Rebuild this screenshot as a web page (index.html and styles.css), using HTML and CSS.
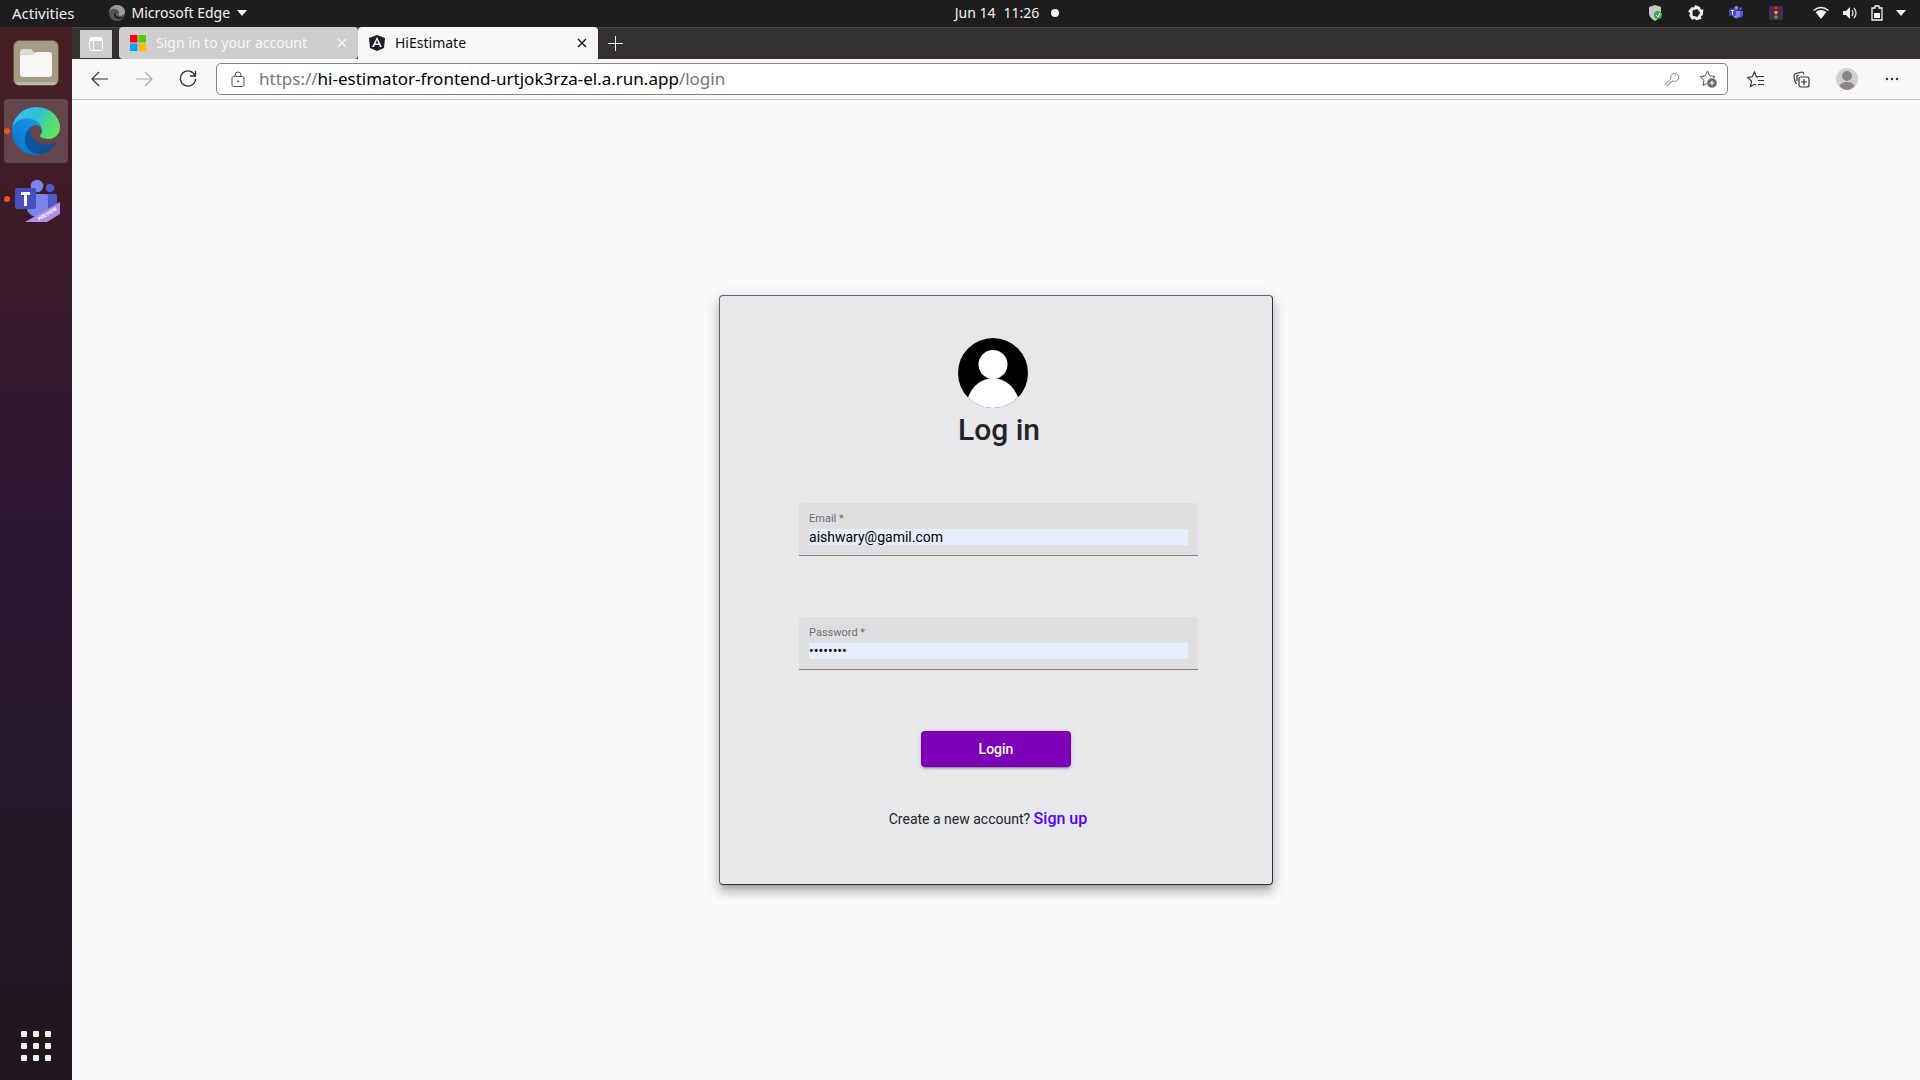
FILE: index.html
```html
<!DOCTYPE html>
<html lang="en">
<head>
<meta charset="utf-8">
<meta name="viewport" content="width=device-width, initial-scale=1">
<title>HiEstimate</title>
<link rel="stylesheet" href="styles.css">
</head>
<body>
<svg class="defs" aria-hidden="true">
  <defs>
    <linearGradient id="edge-dark" x1="0" x2="1" y1="0" y2="0"><stop offset="0" stop-color="#0c59a4"/><stop offset="1" stop-color="#114a8b"/></linearGradient>
    <linearGradient id="edge-mid" x1=".8" x2=".2" y1="0" y2="1"><stop offset="0" stop-color="#1b9de2"/><stop offset=".4" stop-color="#1289da"/><stop offset="1" stop-color="#0078d4"/></linearGradient>
    <linearGradient id="edge-top" x1="0" x2="1" y1=".3" y2=".7"><stop offset="0" stop-color="#35c1f1"/><stop offset=".45" stop-color="#2cc3d5"/><stop offset=".75" stop-color="#52dc7c"/><stop offset="1" stop-color="#5ee45f"/></linearGradient>
    <symbol id="teams" viewBox="0 0 48 44">
      <circle cx="38" cy="9" r="4.300" fill="#5059c9"/>
      <path d="M31 15h12q2 0 2 2v13a8 8 0 0 1-14 3z" fill="#5059c9"/>
      <circle cx="25" cy="7" r="6.300" fill="#7b83eb"/>
      <path d="M15 15h19q2 0 2 2v12a11 11 0 0 1-21 2z" fill="#7b83eb"/>
      <rect x="3" y="9" width="21" height="21" rx="2" fill="#4950bc"/>
      <path d="M9 13h9v3h-3v11h-3V16H9z" fill="#fff"/>
    </symbol>
  </defs>
</svg>

<header class="topbar">
  <div class="topbar-left">
    <button class="plain activities">Activities</button>
    <button class="plain app-menu">
      <svg width="16" height="16" viewBox="0 0 256 256"><circle cx="128" cy="128" r="128" fill="#555"/><path fill="#999" d="M152 149c-1 1-3 3-3 6 0 3 2 5 5 7 14 10 41 9 41 9a60 60 0 0 0 61-61c0-22-8-37-11-44C223 24 178 0 128 0A128 128 0 0 0 0 126c0-36 37-66 80-66 4 0 24 0 42 10a73 73 0 0 1 31 29c6 11 7 24 7 30s-3 13-8 20z"/><path fill="#1d1d1d" d="M240 184c-40 20-120 20-138-35-8-30 15-52 38-45-40-10-68 20-60 65 10 60 110 70 160 15z"/></svg>
      <span>Microsoft Edge</span>
      <svg width="10" height="6" viewBox="0 0 10 6"><path d="M0 0h10L5 6z" fill="#f2f2f2"/></svg>
    </button>
  </div>
  <button class="plain clock"><span class="clock-text"><span>Jun 14</span><span>11:26</span></span><span class="clock-dot"></span></button>
  <div class="topbar-right">
    <svg width="16" height="16" viewBox="0 0 16 16"><path d="M7 0l6 2v6c0 4-3 6-6 8-3-2-6-4-6-8V2z" fill="#c8c8c8"/><circle cx="10" cy="10" r="4" fill="#2fb34a"/><path d="M8 10l2 2 2-4" fill="none" stroke="#fff"/></svg>
    <svg width="16" height="16" viewBox="0 0 16 16"><g fill="#eee"><path id="blade" d="M7 0l5 2 1 3.500L9 4 5 5.500z"/><use href="#blade" transform="rotate(72 8 8)"/><use href="#blade" transform="rotate(144 8 8)"/><use href="#blade" transform="rotate(216 8 8)"/><use href="#blade" transform="rotate(288 8 8)"/></g></svg>
    <svg width="16" height="16"><use href="#teams"/></svg>
    <svg width="16" height="16" viewBox="0 0 16 16"><rect x="1" y="1" width="14" height="14" rx="1" fill="#4a2c50"/><ellipse cx="8" cy="3" rx="2" ry="1.500" fill="#e02424"/><circle cx="8" cy="7.500" r="1.800" fill="#ef9a3c"/><ellipse cx="8" cy="12" rx="2" ry="1.700" fill="#2fa84f"/></svg>
    <div class="status">
      <svg width="16" height="14" viewBox="0 0 16 14"><path d="M2.500 6q5.500-4 11 0L8 13z" fill="#f2f2f2"/><path d="M.5 4.500q7.500-6 15 0" fill="none" stroke="#f2f2f2" stroke-width="1.500"/></svg>
      <svg width="16" height="14" viewBox="0 0 16 14"><path d="M1 5h3l4-4v12L4 9H1z" fill="#f2f2f2"/><path d="M10 4q2 3 0 6M12 2q4 5 0 10" fill="none" stroke="#ddd" stroke-width="1.300"/></svg>
      <svg width="12" height="16" viewBox="0 0 12 16"><path d="M4 1h4v2h3v12H1V3h3z" fill="none" stroke="#f2f2f2" stroke-width="1.300"/><path d="M3 8h6v5H3z" fill="#f2f2f2"/></svg>
      <svg width="10" height="6" viewBox="0 0 10 6"><path d="M0 0h10L5 6z" fill="#f2f2f2"/></svg>
    </div>
  </div>
</header>

<div class="desktop">
  <nav class="dock" aria-label="Dock">
    <button class="dock-item" aria-label="Files">
      <svg width="46" height="46" viewBox="0 0 46 46"><rect x=".5" y=".5" width="45" height="45" rx="6" fill="#a39b84" stroke="#5d5546"/><path d="M2 42h42q-1 3-4 3H6q-3 0-4-3z" fill="#bfb8a3"/><path d="M7 12q0-3 3-3h8l4 4v6H7z" fill="#ded9cb"/><path d="M7 17q0-2 3-2h9l4-3h13q3 0 3 3v19q0 3-3 3H10q-3 0-3-3z" fill="#f8f7f5"/></svg>
    </button>
    <button class="dock-item active" aria-label="Microsoft Edge">
      <span class="running"></span>
      <svg width="48" height="48" viewBox="0 0 256 256">
        <path fill="url(#edge-dark)" d="M231 190.500c-3.400 1.800-6.900 3.400-10.500 4.700a101.500 101.500 0 0 1-35.900 6.400c-47.300 0-88.500-32.500-88.500-74.300A31.500 31.500 0 0 1 112.500 100c-42.800 1.800-53.800 46.400-53.800 72.500 0 74 68.100 81.400 82.800 81.400 7.900 0 19.800-2.300 27-4.600l1.300-.4a128.300 128.300 0 0 0 66.600-52.800 4 4 0 0 0-5.400-5.600z"/>
        <path fill="url(#edge-mid)" d="M105.700 241.400A79.200 79.200 0 0 1 83 220.100a80.700 80.700 0 0 1 29.500-120c3.200-1.500 8.500-4.100 15.600-4a32.400 32.400 0 0 1 25.700 13 31.900 31.900 0 0 1 6.300 18.700c0-.2 24.500-79.600-80-79.600-43.900 0-80 41.600-80 78.200a130.200 130.200 0 0 0 12.100 56 128 128 0 0 0 156.400 67 75.500 75.500 0 0 1-62.800-8z"/>
        <path fill="url(#edge-top)" d="M152.300 148.900c-.9 1-3.400 2.500-3.400 5.600 0 2.600 1.700 5.200 4.800 7.300 14.300 10 41.400 8.600 41.500 8.600a59.600 59.600 0 0 0 30.300-8.300 61.400 61.400 0 0 0 30.400-52.900c.3-22.400-8-37.300-11.300-43.900C223.500 23.900 177.700 0 128 0A128 128 0 0 0 0 126.200c.5-36.500 36.800-66 80-66 3.500 0 23.500.3 42 10a72.600 72.600 0 0 1 30.900 29.300c6.100 10.600 7.200 24.100 7.200 29.500s-2.700 13.300-7.800 19.900z"/>
      </svg>
    </button>
    <button class="dock-item teams" aria-label="Microsoft Teams">
      <span class="running"></span>
      <svg width="48" height="44" viewBox="0 0 48 44"><use href="#teams" width="48" height="44"/><path d="M13 43l35-20v12l-13 8z" fill="#b18ee6"/><text class="ribbon" transform="translate(27 42) rotate(-31)">PREVIEW</text></svg>
    </button>
    <button class="dock-item apps" aria-label="Show Applications">
      <svg width="30" height="30" viewBox="0 0 30 30" fill="#eef0ea"><rect width="6" height="6" rx="1"/><rect x="12" width="6" height="6" rx="1"/><rect x="24" width="6" height="6" rx="1"/><rect y="12" width="6" height="6" rx="1"/><rect x="12" y="12" width="6" height="6" rx="1"/><rect x="24" y="12" width="6" height="6" rx="1"/><rect y="24" width="6" height="6" rx="1"/><rect x="12" y="24" width="6" height="6" rx="1"/><rect x="24" y="24" width="6" height="6" rx="1"/></svg>
    </button>
  </nav>

  <div class="browser">
    <div class="tabstrip">
      <button class="tab-actions" aria-label="Tab actions"><svg width="14" height="14" viewBox="0 0 14 14" fill="none" stroke="#fff"><rect x=".5" y=".5" width="13" height="13" rx="2"/><path d="M1 1.500h12M1 2.500h12M1 3.500h12M4.500 4v9"/></svg></button>
      <div class="tab inactive">
        <svg width="16" height="16" viewBox="0 0 16 16"><path d="M0 0h7.500v7.500H0z" fill="#ff0018"/><path d="M8.500 0H16v7.500H8.500z" fill="#4fce00"/><path d="M0 8.500h7.500V16H0z" fill="#00a3f5"/><path d="M8.500 8.500H16V16H8.500z" fill="#ffba00"/></svg>
        <span class="tab-title">Sign in to your account</span>
        <button class="tab-close" aria-label="Close tab"><svg width="10" height="10" viewBox="0 0 10 10"><path d="M1 1l8 8M9 1L1 9" fill="none" stroke="currentColor" stroke-width="1.300"/></svg></button>
      </div>
      <div class="tab current">
        <svg width="16" height="16" viewBox="0 0 16 16"><path d="M8 0l8 3-1 10-7 3-7-3L0 3z" fill="#1a1e29"/><path d="M8 2L3 12h2l1-2h4l1 2h2zM8 5l1.500 3.500h-3z" fill="#fff" fill-rule="evenodd"/></svg>
        <span class="tab-title">HiEstimate</span>
        <button class="tab-close" aria-label="Close tab"><svg width="10" height="10" viewBox="0 0 10 10"><path d="M1 1l8 8M9 1L1 9" fill="none" stroke="currentColor" stroke-width="1.300"/></svg></button>
      </div>
      <button class="new-tab" aria-label="New tab"><svg width="15" height="15" viewBox="0 0 15 15"><path d="M7.500 0v15M0 7.500h15" stroke="#fff"/></svg></button>
    </div>

    <div class="toolbar">
      <button class="tool" aria-label="Back"><svg width="18" height="16" viewBox="0 0 18 16"><path d="M8 1L1 8l7 7M1 8h16" fill="none" stroke="#333" stroke-width="1.200"/></svg></button>
      <button class="tool" aria-label="Forward"><svg width="18" height="16" viewBox="0 0 18 16"><path d="M10 1l7 7-7 7M17 8H1" fill="none" stroke="#aaa" stroke-width="1.200"/></svg></button>
      <button class="tool" aria-label="Refresh"><svg width="18" height="18" viewBox="0 0 18 18"><path d="M16 5.500A7.600 7.600 0 1 0 16.600 9M16.500 1v5H11" fill="none" stroke="#333" stroke-width="1.300"/></svg></button>
      <div class="address">
        <svg width="14" height="16" viewBox="0 0 14 16" fill="none" stroke="#555"><rect x="1" y="5.500" width="12" height="10" rx="1.500"/><path d="M4 5.500V4a3 3 0 0 1 6 0v1.500"/><circle cx="7" cy="10.500" r=".6" fill="#555"/></svg>
        <div class="url" role="textbox" aria-label="Address" contenteditable="true" spellcheck="false">https://<span class="host">hi-estimator-frontend-urtjok3rza-el.a.run.app</span>/login</div>
        <button class="inner-tool" aria-label="Saved passwords"><svg width="14" height="14" viewBox="0 0 14 14"><path d="M6 7A4 4 0 1 1 8 9L7 9v1H5v2H4v1l-2 .500-1-1V11z" fill="none" stroke="#8b8b8b"/><circle cx="10.500" cy="3.500" r=".7" fill="#888"/></svg></button>
        <button class="inner-tool" aria-label="Add to favorites"><svg width="18" height="18" viewBox="0 0 18 18"><path d="M8.500 1l2.200 4.800 5.300.700-4 3.700 1 5.300-4.500-2.500L4 15.500l1-5.300-4-3.700 5.300-.7z" fill="none" stroke="#555"/><circle cx="13" cy="13" r="5" fill="#666" stroke="#fff" stroke-width=".5"/><path d="M13 10.500v5M10.500 13h5" stroke="#fff" stroke-width="1.200"/></svg></button>
      </div>
      <button class="tool" aria-label="Favorites"><svg width="18" height="17" viewBox="0 0 18 17"><path d="M11 6.200l-1.500-.3L7.500 1 5.200 5.800.8 6.400l3.700 3.700-1 5.400 4-2.200 1.500.7M10 5.500h7M11 9.500h6M11 13.500h6" fill="none" stroke="#333" stroke-width="1.200"/></svg></button>
      <button class="tool wide" aria-label="Collections"><svg width="17" height="17" viewBox="0 0 17 17" fill="none" stroke="#333" stroke-width="1.200"><rect x="6" y="6" width="10" height="10" rx="2"/><path d="M11 8v6M8 11h6M4 12.500Q2.500 12.500 2 10.500L1 5q0-2 2-2.500L9 1q1.500 0 2 2.500M4 10V6q0-2 2-2"/></svg></button>
      <button class="tool wide" aria-label="Profile"><svg width="22" height="22" viewBox="0 0 22 22"><circle cx="11" cy="11" r="11" fill="#d2d0ce"/><circle cx="11" cy="8" r="5" fill="#8a8886"/><path d="M3.500 18Q5 14 11 14t7.500 4Q15 22 11 22t-7.500-4z" fill="#8a8886"/></svg></button>
      <button class="tool" aria-label="Settings and more"><svg width="14" height="4" viewBox="0 0 14 4" fill="#333"><circle cx="2" cy="2" r="1.200"/><circle cx="7" cy="2" r="1.200"/><circle cx="12" cy="2" r="1.200"/></svg></button>
    </div>

    <main class="page">
      <form class="card">
        <div class="heading">
          <svg width="70" height="70" viewBox="0 0 70 70"><circle cx="35" cy="35" r="35"/><circle cx="35" cy="26.500" r="14.500" fill="#fff"/><path d="M10 59.500C14 48 23 40.500 35 40.500S56 48 60 59.500A35 35 0 0 1 10 59.500z" fill="#fff"/></svg>
          <h1>Log in</h1>
        </div>
        <div class="field">
          <label for="email">Email *</label>
          <input id="email" type="email" value="aishwary@gamil.com">
        </div>
        <div class="field">
          <label for="password">Password *</label>
          <input id="password" type="password" value="password">
        </div>
        <button class="login" type="button">Login</button>
        <p class="signup">Create a new account? <a href="#signup">Sign up</a></p>
      </form>
    </main>
  </div>
</div>
</body>
</html>
```
FILE: styles.css
```css
* { box-sizing: border-box; }

body {
  margin: 0;
  min-height: 100vh;
  display: flex;
  flex-direction: column;
  font-family: "Noto Sans", "Open Sans", sans-serif;
  font-size: 14px;
  background: #fafafa;
}

button {
  border: 0;
  padding: 0;
  background: none;
  color: inherit;
  font: inherit;
}

svg { display: block; flex: none; }
.defs { position: absolute; width: 0; height: 0; }

/* System bar */
.topbar {
  height: 27px;
  display: grid;
  grid-template-columns: 1fr auto 1fr;
  align-items: center;
  padding-bottom: 1px;
  background: #1d1d1d;
  color: #f2f2f2;
}
.topbar-left { display: flex; gap: 34px; padding-left: 12px; }
.plain { display: flex; align-items: center; line-height: 20px; white-space: nowrap; }
.activities { font-size: 15px; }
.app-menu { gap: 7px; }
.clock { gap: 12px; padding-left: 94px; }
.clock-text { display: flex; gap: 8px; }
.clock-dot { width: 8px; height: 8px; border-radius: 50%; background: #f2f2f2; }
.topbar-right { display: flex; align-items: center; justify-content: flex-end; gap: 24px; padding-right: 14px; }
.status { display: flex; align-items: center; gap: 13px; margin-left: 5px; }

/* Dock */
.desktop { flex: 1; display: flex; }
.dock {
  width: 72px;
  flex: none;
  display: flex;
  flex-direction: column;
  align-items: center;
  gap: 4px;
  padding: 4px 4px 2px;
  background: linear-gradient(#471f22, #3b1a28 20%, #2d1733 45%, #26172b 70%, #22151d);
}
.dock-item {
  position: relative;
  width: 64px;
  height: 64px;
  display: flex;
  align-items: center;
  justify-content: center;
  border-radius: 4px;
}
.dock-item.active { background: #63474d; }
.dock-item.teams { padding-top: 4px; }
.running {
  position: absolute;
  left: 0;
  top: 29px;
  width: 6px;
  height: 6px;
  border-radius: 50%;
  background: #e95420;
}
.apps { margin-top: auto; }
.ribbon { font: bold 5px Roboto, sans-serif; fill: #fff; }

/* Browser chrome */
.browser { flex: 1; min-width: 0; display: flex; flex-direction: column; }
.tabstrip {
  height: 32px;
  display: flex;
  align-items: center;
  padding-left: 8px;
  background: #33312f;
  border-top: 1px solid #484644;
}
.tab-actions {
  width: 32px;
  height: 28px;
  margin-right: 7px;
  display: grid;
  place-items: center;
  background: #cecece;
}
.tab {
  width: 239px;
  height: 32px;
  margin-top: -1px;
  display: flex;
  align-items: center;
  gap: 10px;
  padding: 0 9px 0 11px;
  border-radius: 4px;
}
.tab.inactive { background: #cecece; color: #f7f7f7; }
.tab.current { width: 240px; background: #f7f7f7; color: #111; border-radius: 4px 4px 0 0; }
.tab-title { flex: 1; line-height: 20px; white-space: nowrap; }
.tab-close { padding: 2px; }
.new-tab { padding: 2px 10px; }

.toolbar {
  height: 41px;
  display: flex;
  align-items: center;
  padding: 0 6px;
  background: #f7f7f7;
  border-bottom: 1px solid #c2c2c2;
}
.tool { width: 44px; height: 32px; display: grid; place-items: center; }
.tool.wide { width: 46px; }
.address {
  flex: 1;
  min-width: 0;
  height: 32px;
  margin: 0 6px;
  display: flex;
  align-items: center;
  padding: 0 9px 0 14px;
  background: #fff;
  border: 1px solid #858585;
  border-radius: 5px;
}
.url {
  flex: 1;
  min-width: 0;
  padding-left: 14px;
  font-size: 17px;
  line-height: 24px;
  color: #767676;
  white-space: nowrap;
  overflow: hidden;
}
.host { color: #000; }
.inner-tool { width: 36px; height: 28px; display: grid; place-items: center; }
.inner-tool:last-child { width: 20px; margin-left: 8px; }

/* Login page */
.page {
  flex: 1;
  display: grid;
  place-items: center;
  background: #fafafa;
  color: #212529;
  font-family: Roboto, sans-serif;
}
.card {
  width: 30%;
  min-width: 480px;
  display: flex;
  flex-direction: column;
  align-items: center;
  padding: 42px 64px 53px;
  background: #e6e8ea;
  border: 1px solid #333;
  border-color: #666 #333 #333 #666;
  border-radius: 4px;
  box-shadow: 0 5px 5px -3px rgba(0, 0, 0, .2), 0 8px 10px 1px rgba(0, 0, 0, .14), 0 3px 14px 2px rgba(0, 0, 0, .12);
}
.heading { margin: 0 0 55px 6px; }
h1 { margin: 4px 0 0; font-size: 30px; font-weight: 500; line-height: 36px; }
.field {
  width: 94%;
  margin: 0 0 61px 5px;
  padding: 10px 10px 10px;
  background: #dddfe1;
  border-bottom: 1px solid #808284;
  border-radius: 4px 4px 0 0;
}
.field label { display: block; font-size: 11px; line-height: 12px; margin-bottom: 4px; color: #6c6e70; }
.field input {
  display: block;
  width: 100%;
  height: 16px;
  border: 0;
  padding: 0;
  background: #e6edfd;
  color: #000;
  font: 14px/16px Roboto, sans-serif;
}
.login {
  width: 150px;
  height: 36px;
  border-radius: 4px;
  background: #7d00b8;
  color: #fff;
  font-size: 14px;
  font-weight: 500;
  box-shadow: 0 3px 1px -2px rgba(0, 0, 0, .2), 0 2px 2px rgba(0, 0, 0, .14), 0 1px 5px rgba(0, 0, 0, .12);
}
.signup { margin: 40px 16px 0 0; font-size: 14px; line-height: 24px; }
.signup a { color: #5a00fa; font-size: 16px; font-weight: 500; text-decoration: none; }
```
